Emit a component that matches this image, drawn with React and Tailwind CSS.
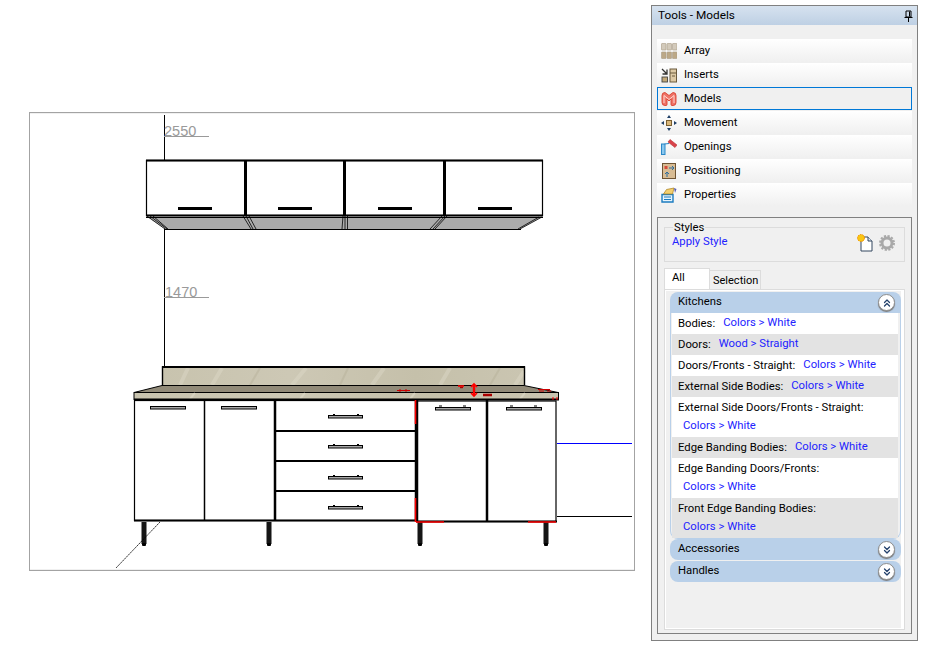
import React from "react";
import { ChevronsDown, ChevronsUp } from "lucide-react";

const ArrayIcon = () => (
  <svg width="16" height="16" viewBox="0 0 16 16">
    {[0, 5.5, 11].map((x) =>
      [0.5, 9].map((y) => (
        <rect key={x + "-" + y} x={x + 0.5} y={y} width="4.5" height="6.5" rx="0.5" fill={y === 0.5 ? "#d3cabb" : "#bca887"} stroke="#a89a84" strokeWidth="0.6" />
      ))
    )}
  </svg>
);

const InsertsIcon = () => (
  <svg width="16" height="16" viewBox="0 0 16 16">
    <path d="M1 2l4.5 4.5M6 2.5V7H1.5" fill="none" stroke="#333" strokeWidth="1.3" />
    <rect x="1" y="10" width="5.5" height="5" fill="#c2a878" stroke="#444" strokeWidth="0.9" />
    <rect x="9" y="2" width="6.5" height="13" fill="#ddc9a4" stroke="#6b5a3c" strokeWidth="1" />
    <path d="M9 6h6.5M11 9h3" stroke="#6b5a3c" strokeWidth="1" />
  </svg>
);

const ModelsIcon = () => (
  <svg width="16" height="14" viewBox="0 0 16 14">
    <path d="M1 3.5a3 3 0 0 1 3-3l4 3 4-3a3 3 0 0 1 3 3v7a3 3 0 0 1-3 3h-1a1 1 0 0 1-1-1V7L8 9 6 7v5.5a1 1 0 0 1-1 1H4a3 3 0 0 1-3-3z" fill="#ef7468" stroke="#d9402f" strokeWidth="0.9" />
    <path d="M3 11V3.5l5 4 5-4V11" fill="none" stroke="#ffd6cf" strokeWidth="1" />
  </svg>
);

const MovementIcon = () => (
  <svg width="16" height="16" viewBox="0 0 16 16">
    <rect x="5.5" y="5.5" width="5" height="5" fill="#d9b77a" stroke="#7a5f30" />
    <path d="M8 0l2 3H6zM8 16l-2-3h4zM0 8l3-2v4zM16 8l-3 2V6z" fill="#1f3f66" />
  </svg>
);

const OpeningsIcon = () => (
  <svg width="16" height="16" viewBox="0 0 16 16">
    <rect x="0.5" y="5" width="3.5" height="10.5" fill="#8cc8ee" stroke="#2b88c8" />
    <path d="M3.5 5L8 4.5" stroke="#2b88c8" />
    <path d="M7 3l2-2.5 7 5.5-2 2.5z" fill="#d9434b" stroke="#b33" strokeWidth="0.6" />
  </svg>
);

const PositioningIcon = () => (
  <svg width="14" height="16" viewBox="0 0 14 16">
    <rect x="0.5" y="0.5" width="13" height="15" fill="#d8bc94" stroke="#6e5434" />
    <rect x="2.5" y="3" width="3" height="3" fill="#d84a3a" />
    <path d="M7 5h5M10 3l2 2-2 2M5 14V9M3 11l2-2 2 2" fill="none" stroke="#2d6c9c" />
  </svg>
);

const PropertiesIcon = () => (
  <svg width="16" height="16" viewBox="0 0 16 16">
    <path d="M1 7.5h11V15H1z" fill="#e8f4fc" stroke="#1c7cc0" strokeWidth="1.4" />
    <path d="M3 10h7M3 12.5h7" stroke="#1c7cc0" />
    <path d="M2.5 7l3-4.5L13 1l-1.5 6z" fill="#f4cf6e" stroke="#a77f20" strokeWidth="0.7" />
    <path d="M13 1l2.5 1-1.5 4z" fill="#5a5fb0" />
  </svg>
);

const tools = [
  { name: "Array", icon: <ArrayIcon /> },
  { name: "Inserts", icon: <InsertsIcon /> },
  { name: "Models", icon: <ModelsIcon />, active: true },
  { name: "Movement", icon: <MovementIcon /> },
  { name: "Openings", icon: <OpeningsIcon /> },
  { name: "Positioning", icon: <PositioningIcon /> },
  { name: "Properties", icon: <PropertiesIcon /> },
];

const rows = [
  { label: "Bodies:", value: "Colors > White" },
  { label: "Doors:", value: "Wood > Straight", shade: true },
  { label: "Doors/Fronts - Straight:", value: "Colors > White" },
  { label: "External Side Bodies:", value: "Colors > White", shade: true },
  { label: "External Side Doors/Fronts - Straight:", value: "Colors > White", wrap: true },
  { label: "Edge Banding Bodies:", value: "Colors > White", shade: true },
  { label: "Edge Banding Doors/Fronts:", value: "Colors > White", wrap: true },
  { label: "Front Edge Banding Bodies:", value: "Colors > White", shade: true, wrap: true },
];

const RoundButton = ({ up }) => (
  <span className="flex h-[17px] w-[17px] items-center justify-center rounded-full border border-[#8f8f8f] bg-white shadow-[0_1px_1px_#777]">
    {up ? (
      <ChevronsUp size={12} strokeWidth={2.5} className="text-[#23406b]" />
    ) : (
      <ChevronsDown size={12} strokeWidth={2.5} className="text-[#23406b]" />
    )}
  </span>
);

const GroupHeader = ({ title, up }) => (
  <div className={`flex h-[21px] items-center justify-between bg-[#b9d0e9] pl-2 pr-[6px] ${up ? "rounded-t-lg" : "rounded-lg"}`}>
    <span className="-mt-[2px]">{title}</span>
    <RoundButton up={up} />
  </div>
);

const Row = ({ label, value, shade, wrap }) => (
  <div className={`pl-[6px] ${shade ? "bg-[#e3e3e3]" : "bg-white"} ${wrap ? "h-[40px] pt-[1px]" : "flex h-[21px] items-center"}`}>
    <span className={wrap ? "block h-[19px] leading-[20px]" : ""}>{label}</span>
    <span className={wrap ? "block pl-[5px] leading-[18px] text-[#2222ff]" : "-mt-[2px] ml-[8px] text-[#2222ff]"}>{value}</span>
  </div>
);

const Drawing = () => {
  const topHandles = [178, 278, 378, 478];
  const drawerHandles = [416, 446, 477, 507];
  const legs = [144, 269, 420, 546];
  const doorHandles = [
    [150, 407],
    [221, 407],
    [435, 408],
    [506, 408],
  ];

  return (
    <svg width="926" height="646" viewBox="0 0 926 646" className="block">
      <defs>
        <linearGradient id="stone" x1="0" y1="0" x2="1" y2="0">
          <stop offset="0" stopColor="#c8c3ae" />
          <stop offset="0.35" stopColor="#cdc8b5" />
          <stop offset="0.7" stopColor="#c5c0aa" />
          <stop offset="1" stopColor="#cac5b1" />
        </linearGradient>
      </defs>

      {/* viewport frame */}
      <rect x="29.5" y="112.5" width="605" height="458" fill="#fff" stroke="#a3a3a3" />
      <path d="M30 113.5h604M30 569.5h604" stroke="#f0f0f0" />

      {/* dimensions */}
      <path d="M164.5 115V160M164.5 228V367" stroke="#000" />
      <text x="164" y="136" fontFamily="Liberation Sans, sans-serif" fontSize="14.5" fill="#9a9a9a">2550</text>
      <path d="M164 136.5h45" stroke="#9a9a9a" />
      <text x="165" y="297" fontFamily="Liberation Sans, sans-serif" fontSize="14.5" fill="#9a9a9a">1470</text>
      <path d="M164 297.5h45" stroke="#9a9a9a" />

      {/* wall cabinets */}
      <path d="M147 217h395l-22 12H165z" fill="#ababab" />
      <rect x="146.5" y="160.5" width="396" height="55" fill="#fff" stroke="#000" strokeWidth="1.2" />
      <path d="M146 160.5h397M146 215.5h397" stroke="#000" strokeWidth="2" />
      <path d="M245.5 160v56M344.5 160v56M444.5 160v56" stroke="#000" strokeWidth="3" />
      <path d="M146 217.5h397M165 229.5h356" stroke="#000" />
      <path d="M147 216l18 13M150 216l17 13M153 216l15 13" stroke="#000" strokeWidth="0.8" />
      <path d="M243 216l8 13M246 216l7 13M249 216l7 13" stroke="#000" strokeWidth="0.8" />
      <path d="M343 216l-1 13M345 216v13M347.5 216v13" stroke="#000" strokeWidth="0.8" />
      <path d="M442 216l-12 13M445 216l-12 13M447 216l-12 13" stroke="#000" strokeWidth="0.8" />
      <path d="M542 217l-22 12M539 217l-21 12" stroke="#000" strokeWidth="0.8" />
      {topHandles.map((x) => (
        <path key={x} d={`M${x} 208.5h34`} stroke="#000" strokeWidth="3" />
      ))}

      {/* countertop */}
      <rect x="162.5" y="367" width="362" height="18" fill="url(#stone)" />
      <path d="M212 385l10-17M372 385l12-17M515 385l9-14M292 385l14-17M180 385l8-17M440 385l10-17" stroke="#dedac9" strokeWidth="4" opacity="0.45" />
      <path d="M250 385l10-17M340 385l8-17M490 385l10-17" stroke="#b4ae96" strokeWidth="2" opacity="0.4" />
      <path d="M162.5 385v-18h362v18" fill="none" stroke="#000" strokeWidth="1.4" />
      <path d="M162 367h363" stroke="#000" strokeWidth="2" />
      <path d="M162 385.5h362l34 7H134z" fill="#918a78" stroke="#000" strokeWidth="1" />
      <rect x="134" y="392.5" width="424.5" height="7" fill="url(#stone)" stroke="#000" />
      <path d="M190 399l5-6M300 399l5-6M410 399l5-6M520 399l5-6" stroke="#e0dccb" strokeWidth="2" opacity="0.6" />
      <path d="M134 399.5h425" stroke="#000" strokeWidth="2" />

      {/* base cabinets */}
      <rect x="134.5" y="400.5" width="282" height="120" fill="#fff" stroke="#000" strokeWidth="1.2" />
      <rect x="416.5" y="401" width="139.5" height="120.5" fill="#fff" stroke="#000" strokeWidth="1.2" />
      <path d="M134 520.5h283M416 521.5h141" stroke="#000" strokeWidth="2" />
      <path d="M204.5 400v120" stroke="#000" strokeWidth="1.5" />
      <path d="M275 400v120M487 400v121" stroke="#000" strokeWidth="2.5" />
      <path d="M416.5 400v121" stroke="#000" strokeWidth="3.5" />
      <path d="M275 431h141M275 461h141M275 491h141" stroke="#000" strokeWidth="2" />
      {doorHandles.map(([x, y]) => (
        <rect key={x} x={x + 0.5} y={y - 0.5} width="35" height="2.5" fill="#a8a8a8" stroke="#000" />
      ))}
      {drawerHandles.map((y) => (
        <g key={y}>
          <rect x="328.5" y={y - 0.5} width="34" height="2.5" fill="#a8a8a8" stroke="#000" />
          <path d={`M333 ${y - 1.5}h2M357 ${y - 1.5}h2`} stroke="#000" />
        </g>
      ))}
      {[435, 506].map((x) => (
        <path key={x} d={`M${x + 4} 406h3M${x + 28} 406h3`} stroke="#000" />
      ))}

      {/* legs */}
      {legs.map((x) => (
        <g key={x}>
          <rect x={x - 2.5} y="522" width="5" height="22" fill="#151515" />
          <rect x={x - 2} y="543" width="4" height="3" rx="1" fill="#000" />
        </g>
      ))}

      {/* guide lines */}
      <path d="M160 522l-44 46" stroke="#000" strokeWidth="0.8" strokeDasharray="2 0.6" />
      <path d="M557 443.5h75" stroke="#0000ff" />
      <path d="M557 516.5h75" stroke="#000" />

      {/* collisions */}
      <path d="M415.5 400v24M415.5 498v24M416 522h28M528 522h28" stroke="#f00" strokeWidth="1.6" />
      <path d="M474 385v10" stroke="#f00" strokeWidth="2.5" />
      <path d="M471 387l3-3 3 3M471 393l3 3 3-3" fill="none" stroke="#f00" strokeWidth="1.6" />
      <path d="M458 386h6" stroke="#f00" strokeWidth="1.6" />
      <path d="M460 387.5h3" stroke="#a00" strokeWidth="1.4" />
      <path d="M483 395h9" stroke="#a00" strokeWidth="2.5" />
      <path d="M397 390.5h13M400 389v3M406 389v3" stroke="#c00" />
      <path d="M538 389.5h12M539 391h5M547 391h4" stroke="#c00" />
      <path d="M553 400v-3M557 400v-3" stroke="#f00" />
    </svg>
  );
};

const activeTool = "shadow-[inset_0_0_0_1px_#0078d7] bg-[#f0f0f0]";
const idleTool = "bg-gradient-to-b from-white to-[#f0f0f0]";

const App = () => {
  return (
    <div className="relative h-[646px] w-[926px] overflow-hidden bg-white font-['Roboto',sans-serif] text-[11.3px] leading-none text-black">
      <Drawing />

      <aside className="absolute left-[651px] top-[5px] flex h-[636px] w-[267px] flex-col border border-[#808080] bg-[#f0f0f0]">
        <div className="flex h-[19px] items-center justify-between bg-gradient-to-b from-[#d6e2ef] to-[#bed0e4] pl-[6px] pr-[4px] text-[11.8px]">
          <span>Tools - Models</span>
          <svg width="9" height="12" viewBox="0 0 9 12">
            <path d="M2 1h5v6H2zM0.5 7.5h8M4.5 8v4M5.5 1.5v5" fill="none" stroke="#000" />
          </svg>
        </div>

        <div className="mt-[14px] flex flex-col gap-px px-[5px]">
          {tools.map((t) => (
            <div key={t.name} className={`flex h-[23px] items-center gap-[7px] pl-[4px] ${t.active ? activeTool : idleTool}`}>
              <span className="flex w-[16px] justify-center">{t.icon}</span>
              <span>{t.name}</span>
            </div>
          ))}
        </div>

        <div className="mx-[5px] mt-[11px] flex h-[417px] flex-col border border-[#808080] px-[6px] pt-[9px]">
          <div className="relative h-[35px] shrink-0 border border-[#dcdcdc]">
            <span className="absolute -top-[6px] left-[8px] bg-[#f0f0f0] px-px">Styles</span>
            <span className="absolute left-[7px] top-[8px] text-[#2222ff]">Apply Style</span>
            <svg className="absolute left-[192px] top-[6px]" width="16" height="18" viewBox="0 0 16 18">
              <path d="M4 3h7l4 4v10H4z" fill="#fff" stroke="#33475f" />
              <path d="M11 3v4h4" fill="#dfe7ef" stroke="#33475f" />
              <circle cx="4" cy="4" r="3.5" fill="#f9c613" stroke="#f08a00" strokeDasharray="1.5 1" />
            </svg>
            <svg className="absolute left-[214px] top-[7px]" width="16" height="16" viewBox="0 0 16 16">
              <circle cx="8" cy="8" r="5" fill="none" stroke="#a9a9a9" strokeWidth="3" />
              <circle cx="8" cy="8" r="7" fill="none" stroke="#a9a9a9" strokeWidth="2" strokeDasharray="2.2 1.5" />
            </svg>
          </div>

          <div className="mt-[6px] flex h-[21px] shrink-0 items-end">
            <div className="flex h-[21px] w-[46px] items-start border border-b-0 border-[#dcdcdc] bg-white pl-[7px] pt-[3px]">All</div>
            <div className="flex h-[19px] w-[51px] items-center border border-b-0 border-l-0 border-[#dcdcdc] pl-[3px] text-[11px]">Selection</div>
          </div>

          <div className="flex h-[341px] flex-col border border-[#dcdcdc] bg-white p-px pr-[3px]">
            <div className="flex h-full flex-col bg-[#f0f0f0] pl-[4px] pt-px">
              <GroupHeader title="Kitchens" up />
              <div className="flex flex-col rounded-b-lg border-x border-b border-[#b9d0e9] pl-px pr-[2px]">
                {rows.map((r) => (
                  <Row key={r.label} {...r} />
                ))}
              </div>
              <div className="flex flex-col gap-px">
                <GroupHeader title="Accessories" />
                <GroupHeader title="Handles" />
              </div>
            </div>
          </div>
        </div>
      </aside>
    </div>
  );
};

export default App;
